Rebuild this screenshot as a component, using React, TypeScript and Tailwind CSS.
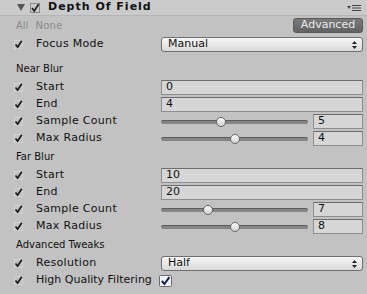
import React from "react";

const font = { fontFamily: '"DejaVu Sans", Verdana, sans-serif' };

function Tick() {
  return (
    <svg width="9" height="9" viewBox="0 0 9 9" className="block">
      <rect x="0.5" y="0.5" width="8" height="8" fill="none" stroke="#d2d2d2" strokeWidth="1" />
      <path d="M1.5 4.5 L3.6 7 L7.8 0.8" fill="none" stroke="#1c1c1c" strokeWidth="1.7" />
    </svg>
  );
}

function TextField({ value }: { value: string }) {
  return (
    <div className="flex h-[15px] w-full items-center border border-[#8e8e8e] border-t-[#6c6c6c] bg-[#d6d6d6] pl-[4px] text-[11px] text-[#111]">
      {value}
    </div>
  );
}

function Dropdown({ value }: { value: string }) {
  return (
    <div className="flex h-[15px] w-full items-center justify-between rounded-[3px] border border-[#6f6f6f] bg-gradient-to-b from-[#f7f7f7] to-[#d9d9d9] pl-[6px] pr-[5px] text-[11px] text-[#111]">
      <span>{value}</span>
      <svg width="5" height="8" viewBox="0 0 5 8">
        <path d="M2.5 0 L5 3 L0 3 Z M2.5 8 L5 5 L0 5 Z" fill="#222" />
      </svg>
    </div>
  );
}

function Slider({ offset, value }: { offset: number; value: string }) {
  return (
    <div className="flex w-full items-center">
      <div className="relative h-[4px] flex-1 rounded-full border-t border-[#5c5c5c] bg-[#858585]">
        <div
          className="absolute top-[-4px] h-[10px] w-[10px] rounded-full border border-[#666] bg-gradient-to-b from-[#ffffff] to-[#cfcfcf]"
          style={{ left: offset }}
        />
      </div>
      <div className="ml-[5px] w-[50px]">
        <TextField value={value} />
      </div>
    </div>
  );
}

function Row({ label, children }: { label: string; children?: React.ReactNode }) {
  return (
    <div className="flex h-[17px] items-center">
      <div className="w-[36px] pl-[14px]">
        <Tick />
      </div>
      <div className="w-[125px] whitespace-nowrap text-[11px] tracking-[0.3px] text-[#111]">{label}</div>
      <div className="flex flex-1 items-center pr-[4px]">{children}</div>
    </div>
  );
}

function Section({ title }: { title: string }) {
  return (
    <div className="flex h-[20px] items-center pb-[2px] pl-[16px] text-[10px] text-[#111]">{title}</div>
  );
}

export default function App() {
  return (
    <div className="h-[294px] w-[367px] overflow-hidden bg-[#c2c2c2]" style={font}>
      {/* Header */}
      <div className="flex h-[16px] items-center border-b border-[#b4b4b4] bg-[#cbcbcb]">
        <svg width="8" height="7" viewBox="0 0 8 7" className="ml-[17px]">
          <path d="M0 0 L8 0 L4 7 Z" fill="#555" />
        </svg>
        <svg width="10" height="10" viewBox="0 0 10 10" className="ml-[5px]">
          <rect x="0.5" y="0.5" width="9" height="9" fill="none" stroke="#8a8a8a" />
          <path d="M2 5 L4.2 8 L8.6 1.2" fill="none" stroke="#1c1c1c" strokeWidth="1.6" />
        </svg>
        <span className="ml-[8px] text-[11px] font-bold tracking-[1px] text-[#111]">Depth Of Field</span>
        <div className="ml-auto mr-[6px] flex items-center gap-[1px]">
          <svg width="4" height="3" viewBox="0 0 4 3">
            <path d="M0 0 L4 0 L2 3 Z" fill="#444" />
          </svg>
          <svg width="9" height="6" viewBox="0 0 9 6">
            <path d="M0 0.5 H9 M0 3 H9 M0 5.5 H9" stroke="#444" strokeWidth="1" />
          </svg>
        </div>
      </div>

      {/* All / None + Advanced */}
      <div className="flex h-[18px] items-center pl-[16px] pr-[4px]">
        <span className="text-[10px] text-[#8a8a8a]">All</span>
        <span className="ml-[7px] text-[10px] tracking-[0.3px] text-[#8a8a8a]">None</span>
        <div className="ml-auto flex h-[15px] w-[70px] items-center justify-center rounded-[3px] border border-[#5a5a5a] bg-gradient-to-b from-[#7a7a7a] to-[#626262] text-[11px] text-[#ececec]">
          Advanced
        </div>
      </div>

      <div className="mt-[2px]">
        <Row label="Focus Mode">
          <Dropdown value="Manual" />
        </Row>
      </div>

      <div className="mt-[6px]">
        <Section title="Near Blur" />
      </div>
      <Row label="Start">
        <TextField value="0" />
      </Row>
      <Row label="End">
        <TextField value="4" />
      </Row>
      <Row label="Sample Count">
        <Slider offset={55} value="5" />
      </Row>
      <Row label="Max Radius">
        <Slider offset={69} value="4" />
      </Row>

      <Section title="Far Blur" />
      <Row label="Start">
        <TextField value="10" />
      </Row>
      <Row label="End">
        <TextField value="20" />
      </Row>
      <Row label="Sample Count">
        <Slider offset={42} value="7" />
      </Row>
      <Row label="Max Radius">
        <Slider offset={69} value="8" />
      </Row>

      <Section title="Advanced Tweaks" />
      <Row label="Resolution">
        <Dropdown value="Half" />
      </Row>
      <div className="flex h-[17px] items-center">
        <div className="w-[36px] pl-[14px]">
          <Tick />
        </div>
        <div className="whitespace-nowrap text-[11px] text-[#111]">High Quality Filtering</div>
        <svg width="13" height="12" viewBox="0 0 13 12" className="ml-[7px]">
          <rect x="0.5" y="0.5" width="12" height="11" rx="1" fill="#eef2f8" stroke="#6b6b6b" />
          <path d="M2.8 6 L5.4 9 L10.4 2.2" fill="none" stroke="#13224a" strokeWidth="2" />
        </svg>
      </div>
    </div>
  );
}
